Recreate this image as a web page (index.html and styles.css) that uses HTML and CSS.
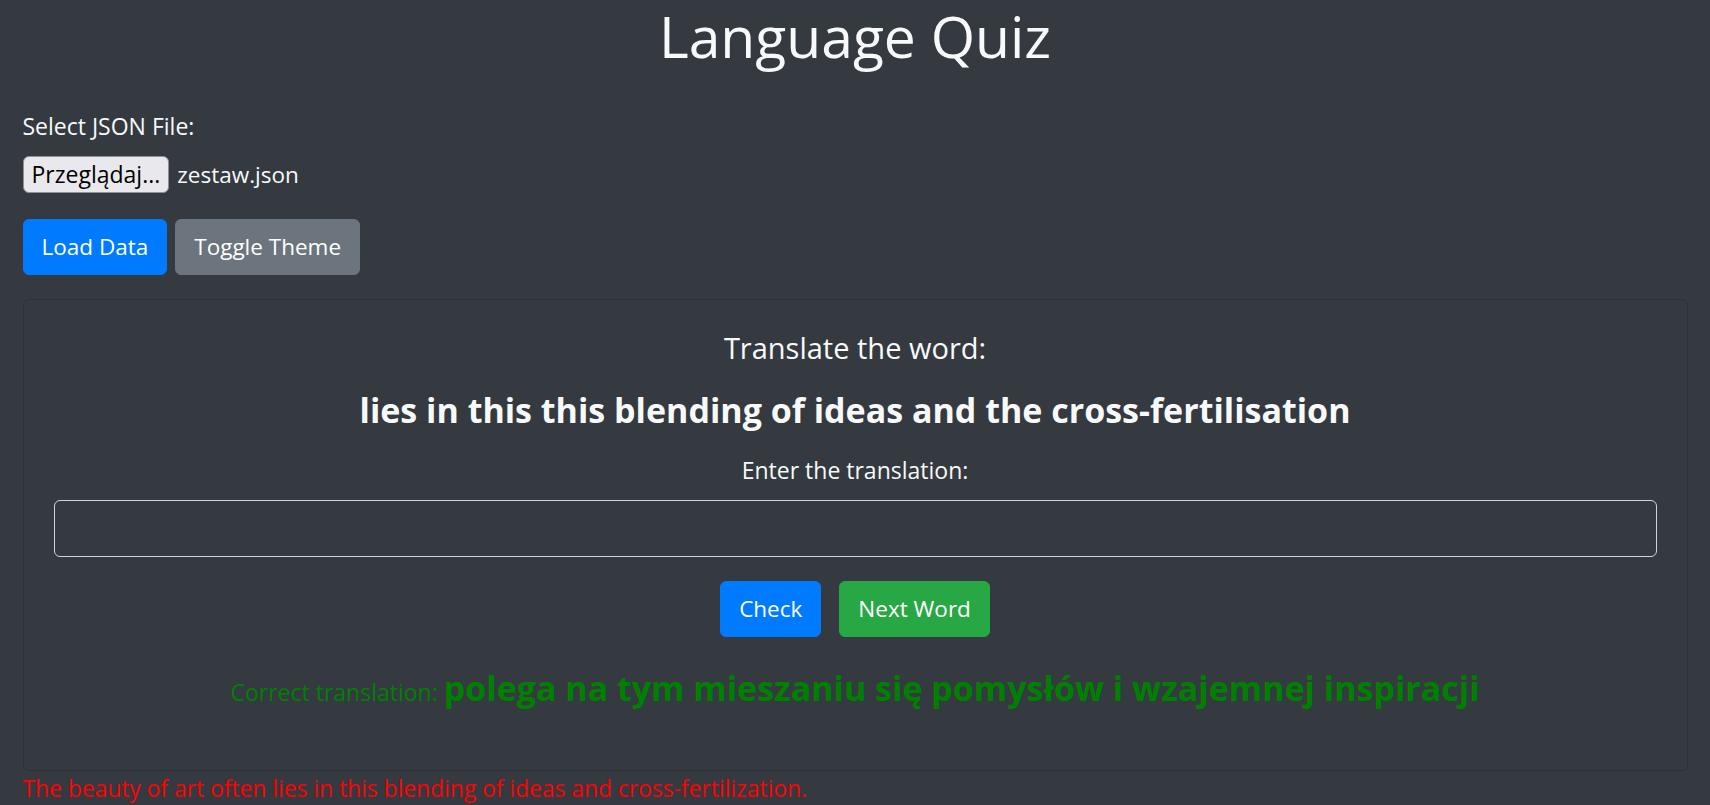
FILE: index.html
```html
<!DOCTYPE html>
<html lang="en">
<head>
<meta charset="utf-8">
<title>Language Quiz</title>
<link rel="stylesheet" href="styles.css">
</head>
<body>
<div class="container">
  <h1 class="title">Language Quiz</h1>
  <div class="form-group">
    <label class="label">Select JSON File:</label>
    <div class="file-row">
      <span class="file-btn">Przeglądaj...</span>
      <span class="file-name">zestaw.json</span>
    </div>
  </div>
  <div class="actions">
    <button class="btn btn-primary">Load Data</button>
    <button class="btn btn-secondary">Toggle Theme</button>
  </div>
  <div class="card">
    <h5 class="prompt">Translate the word:</h5>
    <h4 class="word">lies in this this blending of ideas and the cross-fertilisation</h4>
    <label class="label center">Enter the translation:</label>
    <input class="answer" type="text">
    <div class="quiz-actions">
      <button class="btn btn-primary">Check</button>
      <button class="btn btn-success">Next Word</button>
    </div>
    <div class="feedback">Correct translation: <strong>polega na tym mieszaniu się pomysłów i wzajemnej inspiracji</strong></div>
  </div>
  <div class="sentence">The beauty of art often lies in this blending of ideas and cross-fertilization.</div>
</div>
</body>
</html>
```

FILE: styles.css
```css
html, body {
  margin: 0;
  padding: 0;
  background: #343a40;
}
body {
  font-family: "Open Sans", "Noto Sans", sans-serif;
  color: #f8f9fa;
  font-size: 23px;
  line-height: 36px;
  height: 805px;
  overflow: hidden;
}
.container {
  padding: 0 22.5px;
}
.title {
  margin: 0 0 36px;
  font-size: 57px;
  font-weight: 400;
  line-height: 72px;
  text-align: center;
}
.label {
  display: block;
  margin-bottom: 12px;
}
.label.center {
  text-align: center;
}
.form-group {
  margin-bottom: 26px;
}
.file-row {
  display: flex;
  align-items: center;
  gap: 8px;
  height: 37px;
}
.file-btn {
  box-sizing: border-box;
  height: 37px;
  padding: 0 8px;
  background: #e9e9ed;
  border: 1.5px solid #8f8f9d;
  border-radius: 6px;
  color: #000;
  line-height: 34px;
}
.file-name {
  color: #f8f9fa;
  font-size: 22.5px;
}
.actions {
  display: flex;
  gap: 8px;
  margin-bottom: 24px;
}
.btn {
  font-family: inherit;
  font-size: 22.5px;
  line-height: 36px;
  padding: 9px 18px;
  border: 1.5px solid transparent;
  border-radius: 6px;
  color: #fff;
  cursor: pointer;
}
.btn-primary {
  background: #007bff;
  border-color: #007bff;
}
.btn-secondary {
  background: #6c757d;
  border-color: #6c757d;
}
.btn-success {
  background: #28a745;
  border-color: #28a745;
}
.card {
  border: 1.5px solid rgba(0, 0, 0, 0.15);
  border-radius: 6px;
  padding: 30px;
  text-align: center;
}
.prompt {
  margin: 0 0 12px;
  font-size: 29px;
  font-weight: 400;
  line-height: 36px;
}
.word {
  margin: 23px 0 20px;
  font-size: 34px;
  font-weight: 700;
  line-height: 43px;
}
.answer {
  display: block;
  box-sizing: border-box;
  width: 100%;
  height: 57px;
  margin: 0;
  padding: 9px 18px;
  background: transparent;
  border: 1.5px solid #ced4da;
  border-radius: 6px;
  color: #f8f9fa;
  font-family: inherit;
  font-size: 23px;
}
.quiz-actions {
  display: flex;
  justify-content: center;
  gap: 18px;
  margin-top: 24px;
}
.feedback {
  margin: 24px 0 21px;
  color: #008000;
  line-height: 54px;
}
.feedback strong {
  font-size: 34px;
  font-weight: 700;
}
.sentence {
  color: #ff0000;
  font-size: 22.8px;
}
```
